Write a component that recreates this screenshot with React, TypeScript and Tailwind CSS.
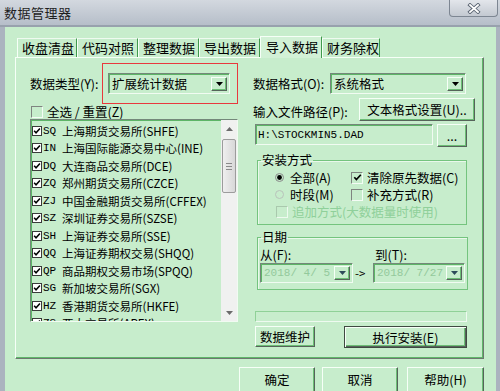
import React from "react";

const exchanges: [string, string][] = [
  ["SQ", "上海期货交易所(SHFE)"],
  ["IN", "上海国际能源交易中心(INE)"],
  ["DQ", "大连商品交易所(DCE)"],
  ["ZQ", "郑州期货交易所(CZCE)"],
  ["ZJ", "中国金融期货交易所(CFFEX)"],
  ["SZ", "深圳证券交易所(SZSE)"],
  ["SH", "上海证券交易所(SSE)"],
  ["QQ", "上海证券期权交易(SHQQ)"],
  ["QP", "商品期权交易市场(SPQQ)"],
  ["SG", "新加坡交易所(SGX)"],
  ["HZ", "香港期货交易所(HKFE)"],
  ["ZS", "亚太交易所(APEX)"],
];

const tabs = [
  { label: "收盘清盘", w: "w-[60px]" },
  { label: "代码对照", w: "w-[61px]" },
  { label: "整理数据", w: "w-[61px]" },
  { label: "导出数据", w: "w-[61px]" },
  { label: "导入数据", w: "w-[62px]", active: true },
  { label: "财务除权", w: "w-[58px]" },
];

const raised =
  "border border-t-[#f6fff7] border-l-[#f6fff7] border-r-[#56635a] border-b-[#56635a] shadow-[inset_-1px_-1px_0_#6cbd75]";
const sunken =
  "border border-t-[#74887a] border-l-[#74887a] border-r-[#f1fbf2] border-b-[#f1fbf2] shadow-[inset_1px_1px_0_#5db567]";
const mono = "font-['Liberation_Mono','Noto_Sans_CJK_SC',monospace]";

const Down = ({ color = "#000" }: { color?: string }) => (
  <svg width="7" height="4" viewBox="0 0 7 4" className="block">
    <path d="M0 0H7L3.5 4Z" fill={color} />
  </svg>
);

const Up = ({ color = "#000" }: { color?: string }) => (
  <svg width="7" height="4" viewBox="0 0 7 4" className="block">
    <path d="M0 4H7L3.5 0Z" fill={color} />
  </svg>
);

const Tick = ({ size = 9 }: { size?: number }) => (
  <svg width={size} height={size} viewBox="0 0 9 9" className="block">
    <path d="M1.3 4.3 L3.4 6.6 L7.8 1.8" fill="none" stroke="#000" strokeWidth="1.7" />
  </svg>
);

const Select = ({
  text,
  className,
  disabled,
}: {
  text: string;
  className: string;
  disabled?: boolean;
}) => (
  <div className={`flex items-center h-[21px] pl-[3px] pr-[2px] ${sunken} ${className}`}>
    <span className={`flex-1 whitespace-pre leading-[16px] ${disabled ? `text-[#93c99b] text-[11px] ${mono}` : ""}`}>
      {text}
    </span>
    <span className={`w-[16px] h-[14px] flex items-center justify-center ${raised}`}>
      <Down color={disabled ? "#2d4a5a" : "#000"} />
    </span>
  </div>
);

const Check = ({ checked, disabled }: { checked?: boolean; disabled?: boolean }) => (
  <span
    className={`w-[12px] h-[12px] shrink-0 flex items-center justify-center border ${
      disabled
        ? "border-t-[#a9c9ad] border-l-[#a9c9ad] border-r-[#eefaef] border-b-[#eefaef]"
        : "border-t-[#7f8580] border-l-[#7f8580] border-r-[#f4fcf5] border-b-[#f4fcf5]"
    }`}
  >
    {checked && <Tick size={9} />}
  </span>
);

const Radio = ({ checked }: { checked?: boolean }) => (
  <svg width="9" height="9" viewBox="0 0 9 9" className="block shrink-0">
    <circle cx="4.5" cy="4.5" r="4" fill="none" stroke={checked ? "#8b8b8b" : "#b9c2ba"} />
    {checked && <circle cx="4.5" cy="4.5" r="2.4" fill="#000" />}
  </svg>
);

const ListBox = () => (
  <div className={`flex h-[203px] w-[208px] ${sunken} shadow-[inset_1px_1px_0_#4fae5a]`}>
    <div className="flex-1 overflow-hidden pt-[2px] text-[11.5px]">
      {exchanges.map(([code, name]) => (
        <div key={code} className="flex items-center h-[17.5px] pl-[1px]">
          <span className="w-[10px] h-[10px] bg-white border border-[#3a3a3a] flex items-center justify-center shrink-0">
            <Tick size={8} />
          </span>
          <span className={`w-[19px] ml-[1px] leading-[14px] text-[11px] ${mono}`}>{code}</span>
          <span className="leading-[14px] whitespace-nowrap">{name}</span>
        </div>
      ))}
    </div>
    <div className="w-[16px] bg-[#f0f1f0] flex flex-col items-center">
      <div className="h-[17px] flex items-center justify-center">
        <Up color="#6b6b6b" />
      </div>
      <div className="mt-[2px] w-[14px] h-[54px] rounded-[2px] border border-[#9c9c9c] bg-gradient-to-r from-[#efefef] to-[#d8d8d8] flex flex-col items-center justify-center gap-[2px]">
        <span className="w-[6px] h-px bg-[#8a8a8a]" />
        <span className="w-[6px] h-px bg-[#8a8a8a]" />
        <span className="w-[6px] h-px bg-[#8a8a8a]" />
      </div>
      <div className="flex-1" />
      <div className="h-[17px] flex items-center justify-center">
        <Down color="#6b6b6b" />
      </div>
    </div>
  </div>
);

const LeftColumn = () => (
  <div className="w-[208px] flex flex-col pt-[15px]">
    <div className="flex items-center h-[21px]">
      <span className="w-[78px] leading-[16px] whitespace-nowrap">数据类型(Y):</span>
      <Select text="扩展统计数据" className="w-[122px]" />
    </div>
    <div className="flex items-center h-[13px] mt-[11px] pl-[1px]">
      <Check />
      <span className="ml-[4px] leading-[14px] whitespace-pre">全选 / 重置(Z)</span>
    </div>
    <div className="mt-[1px]">
      <ListBox />
    </div>
  </div>
);

const RightColumn = () => (
  <div className="w-[224px] flex flex-col pt-[15px]">
    <div className="flex items-center h-[21px]">
      <span className="w-[77px] leading-[16px] whitespace-nowrap">数据格式(O):</span>
      <Select text="系统格式" className="w-[136px]" />
    </div>
    <div className="flex items-center h-[23px] mt-[4px]">
      <span className="w-[106px] leading-[16px] pt-[4px] whitespace-nowrap">输入文件路径(P):</span>
      <div className={`w-[116px] h-[23px] flex items-center justify-center leading-[16px] ${raised}`}>
        文本格式设置(U)..
      </div>
    </div>
    <div className="flex items-start h-[23px] mt-[3px] pl-[2px]">
      <div className={`w-[178px] h-[21px] flex items-center pl-[2px] text-[11px] ${mono} ${sunken}`}>
        <span className="leading-[14px]">H:\STOCKMIN5.DAD</span>
      </div>
      <div className={`ml-[4px] w-[30px] h-[23px] flex items-center justify-center leading-[14px] ${raised}`}>
        ...
      </div>
    </div>

    <fieldset className="mt-[6px] ml-[4px] w-[210px] border border-[#74c47e] shadow-[inset_1px_1px_0_#e9f8eb] pb-[4px]">
      <legend className="ml-[3px] px-[1px] leading-[14px]">安装方式</legend>
      <div className="pt-[2px] pl-[17px]">
        <div className="flex items-center h-[17px]">
          <div className="w-[76px] flex items-center">
            <Radio checked />
            <span className="ml-[6px] leading-[15px]">全部(A)</span>
          </div>
          <Check checked />
          <span className="ml-[4px] leading-[15px] whitespace-nowrap">清除原先数据(C)</span>
        </div>
        <div className="flex items-center h-[17px]">
          <div className="w-[76px] flex items-center">
            <Radio />
            <span className="ml-[6px] leading-[15px]">时段(M)</span>
          </div>
          <Check />
          <span className="ml-[4px] leading-[15px] whitespace-nowrap">补充方式(R)</span>
        </div>
        <div className="flex items-center h-[17px] pl-[1px]">
          <Check disabled />
          <span className="ml-[4px] leading-[15px] text-[#8fd09a] whitespace-nowrap">追加方式(大数据量时使用)</span>
        </div>
      </div>
    </fieldset>

    <fieldset className="mt-[5px] ml-[4px] w-[211px] border border-[#74c47e] shadow-[inset_1px_1px_0_#e9f8eb] pb-[6px]">
      <legend className="ml-[3px] px-[1px] leading-[14px]">日期</legend>
      <div className="pl-[2px]">
        <div className="flex items-center h-[15px] mt-[3px]">
          <span className="w-[115px] leading-[15px]">从(F):</span>
          <span className="leading-[15px]">到(T):</span>
        </div>
        <div className="flex items-center h-[20px] mt-[1px]">
          <Select text="2018/ 4/ 5" className="w-[93px] !h-[20px]" disabled />
          <span className="w-[20px] pl-[2px] leading-[14px] text-[11.5px]">-&gt;</span>
          <Select text="2018/ 7/27" className="w-[92px] !h-[20px]" disabled />
        </div>
      </div>
    </fieldset>

    <div className="mt-[21px] ml-[2px] w-[212px] h-[11px] border border-t-[#8fd197] border-l-[#8fd197] border-r-[#eefaf0] border-b-[#eefaf0]" />

    <div className="flex items-start mt-[4px] ml-[2px]">
      <div className={`w-[60px] h-[21px] flex items-center justify-center leading-[15px] ${raised}`}>
        数据维护
      </div>
      <div className="ml-[29px] w-[123px] h-[22px] border border-[#3f4941] shadow-[inset_1px_1px_0_#f6fff7,inset_-1px_-1px_0_#56635a,inset_-2px_-2px_0_#6cbd75] flex items-center justify-center leading-[15px]">
        执行安装(E)
      </div>
    </div>
  </div>
);

export default function App() {
  return (
    <div className="relative w-[500px] h-[391px] overflow-hidden flex flex-col bg-[#abb3bf] font-['Noto_Sans_CJK_SC',sans-serif] text-[12.5px] text-black">
      {/* title bar */}
      <div className="h-[27px] shrink-0 flex items-start bg-gradient-to-b from-[#d3d8df] to-[#b6bec9] border-b-2 border-[#98a1ad]">
        <span className="pl-[4px] pt-[5px] text-[13px] leading-[16px] tracking-[0.5px] text-[#1f1f1f]">数据管理器</span>
        <div className="ml-auto mr-[2px] w-[49px] h-[17px] rounded-b-[4px] border border-t-0 border-[#7d8692] bg-gradient-to-b from-[#e3e6eb] to-[#c3c9d1] flex items-center justify-center">
          <svg width="14" height="11" viewBox="0 0 14 11">
            <path d="M3 2 L11 9 M11 2 L3 9" stroke="#5a6472" strokeWidth="3.6" strokeLinecap="square" />
            <path d="M3 2 L11 9 M11 2 L3 9" stroke="#fff" strokeWidth="1.8" strokeLinecap="square" />
          </svg>
        </div>
      </div>

      {/* client area */}
      <div className="flex-1 flex pl-[5px] pr-[4px]">
        <div className="flex-1 flex flex-col bg-[#c7edcc]">
          {/* tabs */}
          <div className="h-[30px] flex items-end pl-[12px]">
            {tabs.map((t) =>
              t.active ? (
                <div
                  key={t.label}
                  className={`${t.w} relative z-10 -mb-px h-[22px] bg-[#d2f1d6] border-t border-l border-t-[#f6fff7] border-l-[#f6fff7] border-r border-r-[#3f9a4c] pl-[5px] pt-[1px] text-[13px] leading-[17px]`}
                >
                  {t.label}
                </div>
              ) : (
                <div
                  key={t.label}
                  className={`${t.w} h-[19px] border-t border-l border-t-[#eefaf0] border-l-[#f6fff7] border-r border-r-[#3f9a4c] pl-[4px] pt-[1px] text-[13px] leading-[16px]`}
                >
                  {t.label}
                </div>
              )
            )}
          </div>

          {/* panel */}
          <div className="ml-[10px] w-[469px] h-[302px] flex gap-[15px] pl-[14px] border border-t-[#f6fff7] border-l-[#f6fff7] border-r-[#6d776f] border-b-[#6d776f] shadow-[inset_-1px_-1px_0_#5fb669]">
            <LeftColumn />
            <RightColumn />
          </div>

          {/* bottom buttons */}
          <div className="flex mt-[8px] pl-[234px]">
            <div className={`w-[76px] h-[27px] flex items-start justify-center pt-[4px] leading-[16px] ${raised}`}>确定</div>
            <div className={`ml-[7px] w-[76px] h-[27px] flex items-start justify-center pt-[4px] leading-[16px] ${raised}`}>取消</div>
            <div className={`ml-[9px] w-[77px] h-[27px] flex items-start justify-center pt-[4px] leading-[16px] ${raised}`}>帮助(H)</div>
          </div>
        </div>
      </div>

      {/* red annotation box */}
      <div className="absolute left-[102px] top-[63px] w-[136px] h-[41px] border border-[#e8383d]" />
    </div>
  );
}
